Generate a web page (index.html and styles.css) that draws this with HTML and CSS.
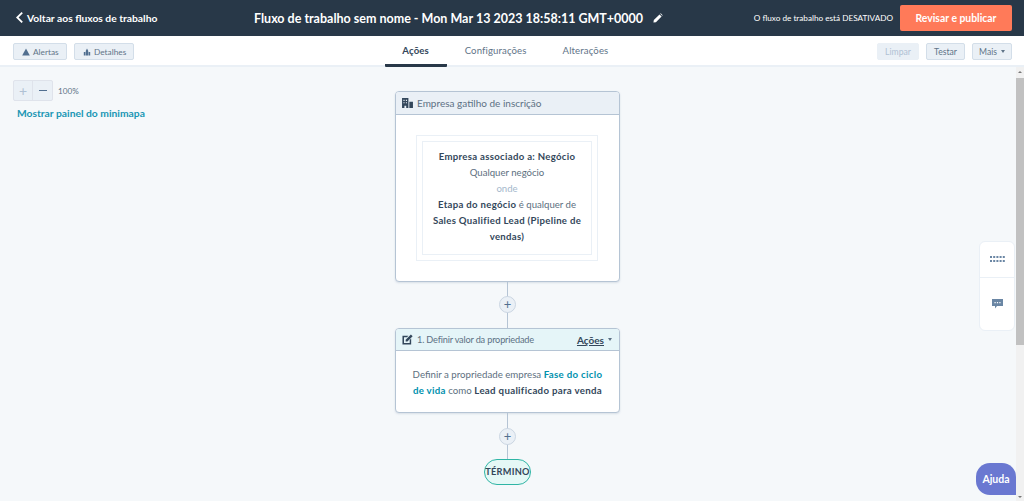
FILE: index.html
```html
<!DOCTYPE html>
<html lang="pt">
<head>
<meta charset="utf-8">
<title>Fluxo de trabalho</title>
<link rel="stylesheet" href="styles.css">
</head>
<body>
<header class="topbar">
  <a class="back">
    <svg class="back-icon" viewBox="0 0 10 14" width="9" height="13"><path d="M8 1.5 2.5 7 8 12.5" fill="none" stroke="#fff" stroke-width="2"/></svg>
    Voltar aos fluxos de trabalho
  </a>
  <div class="title">
    <span>Fluxo de trabalho sem nome - Mon Mar 13 2023 18:58:11 GMT+0000</span>
    <svg viewBox="0 0 12 12" width="10" height="10"><path d="M0.5 11.5 1 8.5 7.8 1.7 10.3 4.2 3.5 11Z M8.6 0.9 9.3 0.4 11.6 2.7 11.1 3.4Z" fill="#fff"/></svg>
  </div>
  <div class="status">
    <span class="status-text">O fluxo de trabalho está DESATIVADO</span>
    <button class="publish">Revisar e publicar</button>
  </div>
</header>
<nav class="subbar">
  <div class="sub-left">
    <button class="btn">
      <svg viewBox="0 0 10 10" width="8" height="8"><path d="M5 .5 9.8 9.5H.2Z" fill="#516f90"/></svg>Alertas
    </button>
    <button class="btn">
      <svg viewBox="0 0 10 10" width="8" height="8"><path d="M3.5 9.5V3.5L5 .5 6.5 3.5V9.5ZM1 9.5V5H3V9.5ZM7 9.5V5H9V9.5Z" fill="#516f90"/></svg>Detalhes
    </button>
  </div>
  <div class="tabs">
    <a class="tab tab-active">Ações</a>
    <a class="tab">Configurações</a>
    <a class="tab">Alterações</a>
  </div>
  <div class="sub-right">
    <button class="btn btn-disabled">Limpar</button>
    <button class="btn">Testar</button>
    <button class="btn">Mais <i class="caret"></i></button>
  </div>
</nav>
<main class="canvas">
  <div class="flow">
    <section class="card card-trigger">
      <div class="card-head head-grey">
        <svg viewBox="0 0 12 11" width="11" height="10"><path d="M0 0H7V11H4.6V8.5H2.6V11H0ZM8 4H12V11H8Z" fill="#33475b" fill-rule="evenodd"/><path d="M1.5 2H2.8V3.2H1.5ZM4.2 2H5.5V3.2H4.2ZM1.5 4.7H2.8V5.9H1.5ZM4.2 4.7H5.5V5.9H4.2Z" fill="#eaf0f6"/></svg>
        <span>Empresa gatilho de inscrição</span>
      </div>
      <div class="card-body trigger-body">
        <div class="filter-outer">
          <div class="filter-inner">
            <p><b>Empresa associado a: Negócio</b></p>
            <p>Qualquer negócio</p>
            <p class="muted">onde</p>
            <p><b>Etapa do negócio</b> é qualquer de</p>
            <p><b>Sales Qualified Lead (Pipeline de</b></p>
            <p><b>vendas)</b></p>
          </div>
        </div>
      </div>
    </section>
    <div class="link"><span class="plus">+</span></div>
    <section class="card card-action">
      <div class="card-head head-blue">
        <svg viewBox="0 0 12 12" width="11" height="11"><path d="M0.5 2H7L5.4 3.6H2.2V9.8H8.4V6.6L10 5V11.5H0.5Z M4 6.2 9.7 0.5 11.6 2.4 5.9 8.1H4Z" fill="#33475b"/></svg>
        <span class="head-title">1. Definir valor da propriedade</span>
        <a class="actions">Ações</a><i class="caret"></i>
      </div>
      <div class="card-body action-body">
        <p>Definir a propriedade empresa <b class="teal">Fase do ciclo</b></p>
        <p><b class="teal">de vida</b> como <b>Lead qualificado para venda</b></p>
      </div>
    </section>
    <div class="link link-end"><span class="plus">+</span></div>
    <div class="end">TÉRMINO</div>
  </div>

  <div class="zoom-panel">
    <div class="zoom-row">
      <div class="zoom-btns">
        <span class="zoom-btn zoom-off">+</span>
        <span class="zoom-btn"><i class="minus"></i></span>
      </div>
      <span class="zoom-level">100%</span>
    </div>
    <a class="minimap">Mostrar painel do minimapa</a>
  </div>

  <aside class="side-panel">
    <div class="side-cell side-top">
      <svg viewBox="0 0 15 7" width="15" height="7"><path d="M0 0h2v2H0zM3.2 0h2v2h-2zM6.4 0h2v2h-2zM9.6 0h2v2h-2zM12.8 0h2v2h-2zM0 4h2v2H0zM3.2 4h2v2h-2zM6.4 4h2v2h-2zM9.6 4h2v2h-2zM12.8 4h2v2h-2z" fill="#6a86a4"/></svg>
    </div>
    <div class="side-cell">
      <svg viewBox="0 0 11 10" width="11" height="10"><path d="M0 0H11V7H5L3 9.5V7H0Z" fill="#6a86a4"/><path d="M2.5 3h1.2v1.2H2.5zM4.9 3h1.2v1.2H4.9zM7.3 3h1.2v1.2H7.3z" fill="#fff"/></svg>
    </div>
  </aside>

  <button class="help">Ajuda</button>

  <div class="scrollbar">
    <i class="arrow-up"></i>
    <div class="thumb"></div>
    <i class="arrow-down"></i>
  </div>
</main>
</body>
</html>
```
FILE: styles.css
```css
* { box-sizing: border-box; }
html, body { margin: 0; height: 100%; overflow: hidden; }
body {
  font-family: "Lato", "Open Sans", sans-serif;
  color: #33475b;
  background: #f5f8fa;
  display: flex;
  flex-direction: column;
  height: 501px;
}
p { margin: 0; }
button { font-family: inherit; }

.topbar {
  height: 36px;
  flex: none;
  background: #283848;
  color: #fff;
  display: flex;
  align-items: center;
  position: relative;
  padding: 0 12px 0 15px;
}
.back {
  display: flex;
  align-items: center;
  gap: 3px;
  font-size: 10.3px;
  font-weight: 700;
  margin-top: -1px;
}
.title {
  position: absolute;
  left: 254px;
  top: 0;
  height: 36px;
  display: flex;
  align-items: center;
  gap: 10px;
  font-size: 12.5px;
  font-weight: 700;
  white-space: nowrap;
}
.status { margin-left: auto; display: flex; align-items: center; gap: 7px; }
.status-text { font-size: 8.2px; }
.publish {
  width: 112px;
  height: 26px;
  border: 0;
  border-radius: 2px;
  background: #ff7a59;
  color: #fff;
  font-size: 10.4px;
  font-weight: 700;
  margin-top: -1px;
}

.subbar {
  height: 31px;
  flex: none;
  background: #fff;
  border-bottom: 2px solid #eaf0f6;
  display: grid;
  grid-template-columns: 1fr auto 1fr;
  align-items: center;
  padding: 0 12px 0 13px;
}
.sub-left { display: flex; gap: 7px; }
.sub-right { display: flex; gap: 7px; justify-content: flex-end; }
.btn {
  height: 17px;
  padding: 0 0 0 8px;
  border: 1px solid #d3dee9;
  border-radius: 2px;
  background: #eaf0f6;
  color: #5f7488;
  font-size: 8.6px;
  display: flex;
  align-items: center;
  gap: 4px;
  white-space: nowrap;
}
.sub-left .btn { font-size: 8.3px; gap: 3px; }
.btn svg { flex: none; }
.sub-left .btn:first-child { width: 54px; }
.sub-left .btn:last-child { width: 60px; }
.sub-right .btn:nth-child(1) { width: 42px; }
.sub-right .btn:nth-child(2) { width: 39px; }
.sub-right .btn:nth-child(3) { width: 40px; }
.sub-right .btn { justify-content: center; padding: 0; }
.btn-disabled { color: #b0c1d4; border-color: #eaf0f6; }
.caret {
  display: inline-block;
  width: 0;
  height: 0;
  border: 2.5px solid transparent;
  border-top: 3px solid currentColor;
  border-bottom: 0;
}

.tabs { display: flex; height: 31px; margin-right: 14px; }
.tab {
  font-size: 9.6px;
  color: #5f7488;
  padding: 0 18px;
  height: 31px;
  line-height: 30px;
  letter-spacing: .12px;
}
.tab-active {
  width: 62px;
  padding: 0;
  text-align: center;
  color: #33475b;
  font-weight: 700;
  border-bottom: 3px solid #283848;
  border-radius: 0 0 1px 1px;
}

.canvas { flex: 1; position: relative; overflow: hidden; }
.flow {
  width: 1016px;
  padding-top: 24px;
  display: flex;
  flex-direction: column;
  align-items: center;
}
.card {
  width: 225px;
  background: #fff;
  border: 1px solid #b5c4d4;
  border-radius: 4px;
  overflow: hidden;
  box-shadow: 0 1px 2px rgba(81,111,144,.18);
  margin-right: 1px;
}
.card-head {
  display: flex;
  align-items: center;
  gap: 4px;
  padding: 0 6px;
  font-size: 10px;
  color: #5d7184;
  border-bottom: 1px solid #b5c4d4;
}
.head-grey { height: 23px; background: #eaf0f6; }
.head-blue { height: 22px; background: #e5f5f8; }
.head-title { flex: 1; font-size: 9.2px; letter-spacing: -.18px; }
.actions { color: #33475b; font-weight: 700; text-decoration: underline; }
.head-blue .caret { color: #5d7184; margin: 0 1px 0 0; }

.trigger-body { height: 166px; padding: 20px 21px 0 20px; }
.filter-outer {
  width: 182px;
  height: 126px;
  padding: 5px;
  border: 1px solid #eaf0f6;
}
.filter-inner {
  height: 114px;
  padding: 7px 0 0;
  border: 1px solid #eaf0f6;
  text-align: center;
  font-size: 9.6px;
  line-height: 15.9px;
  color: #5d6f80;
}
b { color: #33475b; font-weight: 700; letter-spacing: .31px; }
.muted { color: #a5b8cc; }
.action-body {
  height: 61px;
  padding: 15px 0 0;
  font-size: 9.7px;
  line-height: 16px;
  color: #5d6f80;
  text-align: center;
}
b.teal { color: #0091ae; }

.link {
  width: 1px;
  height: 46px;
  background: #b5c4d4;
  position: relative;
  flex: none;
  margin-right: 1px;
}
.plus {
  position: absolute;
  left: -8px;
  top: 14px;
  width: 17px;
  height: 17px;
  border-radius: 50%;
  background: #eaf0f6;
  border: 1px solid #cbd6e2;
  color: #516f90;
  font-size: 13px;
  line-height: 14px;
  text-align: center;
}
.link-end .plus { top: 15px; }
.end {
  width: 47px;
  height: 26px;
  border-radius: 13px;
  border: 1px solid #2fb5a5;
  background: #e5f8f6;
  font-size: 9.2px;
  font-weight: 700;
  letter-spacing: .25px;
  line-height: 24px;
  text-align: center;
  margin-right: 1px;
}

.zoom-panel { position: absolute; left: 13px; top: 13px; }
.zoom-row { display: flex; align-items: center; gap: 5px; }
.zoom-btns { display: flex; border: 1px solid #dfe3eb; border-radius: 2px; background: #eaf0f6; }
.zoom-btn {
  width: 19px;
  height: 19px;
  display: flex;
  align-items: center;
  justify-content: center;
  color: #b0c1d4;
  font-size: 14px;
}
.zoom-off { border-right: 1px solid #dfe3eb; }
.minus { width: 8px; height: 1.5px; background: #516f90; }
.zoom-level { font-size: 8.2px; color: #5f7488; }
.minimap {
  display: block;
  margin: 6px 0 0 4px;
  font-size: 10.3px;
  font-weight: 700;
  color: #1a96b4;
  white-space: nowrap;
}

.side-panel {
  position: absolute;
  right: 9px;
  top: 174px;
  width: 36px;
  height: 90px;
  background: #fff;
  border: 1px solid #eaf0f6;
  border-radius: 6px;
  display: flex;
  flex-direction: column;
}
.side-cell { flex: 1; display: flex; align-items: center; justify-content: center; }
.side-top { flex: none; height: 36px; border-bottom: 1px solid #eaf0f6; }

.help {
  position: absolute;
  right: 8px;
  bottom: 6px;
  width: 40px;
  height: 32px;
  padding: 0;
  border: 0;
  border-radius: 14px 14px 0 14px;
  background: #6a78d1;
  color: #fff;
  font-size: 10.5px;
  font-weight: 700;
}

.scrollbar {
  position: absolute;
  right: 0;
  top: 0;
  bottom: 0;
  width: 8px;
  background: #f1f1f1;
}
.thumb {
  position: absolute;
  left: 0;
  right: 0;
  top: 11px;
  height: 267px;
  background: #c1c1c1;
}
.arrow-up, .arrow-down {
  position: absolute;
  left: 2px;
  width: 0;
  height: 0;
  border: 2px solid transparent;
}
.arrow-up { top: 4px; border-bottom: 2px solid #777; border-top: 0; }
.arrow-down { bottom: 3px; border-top: 2px solid #777; border-bottom: 0; }
```
